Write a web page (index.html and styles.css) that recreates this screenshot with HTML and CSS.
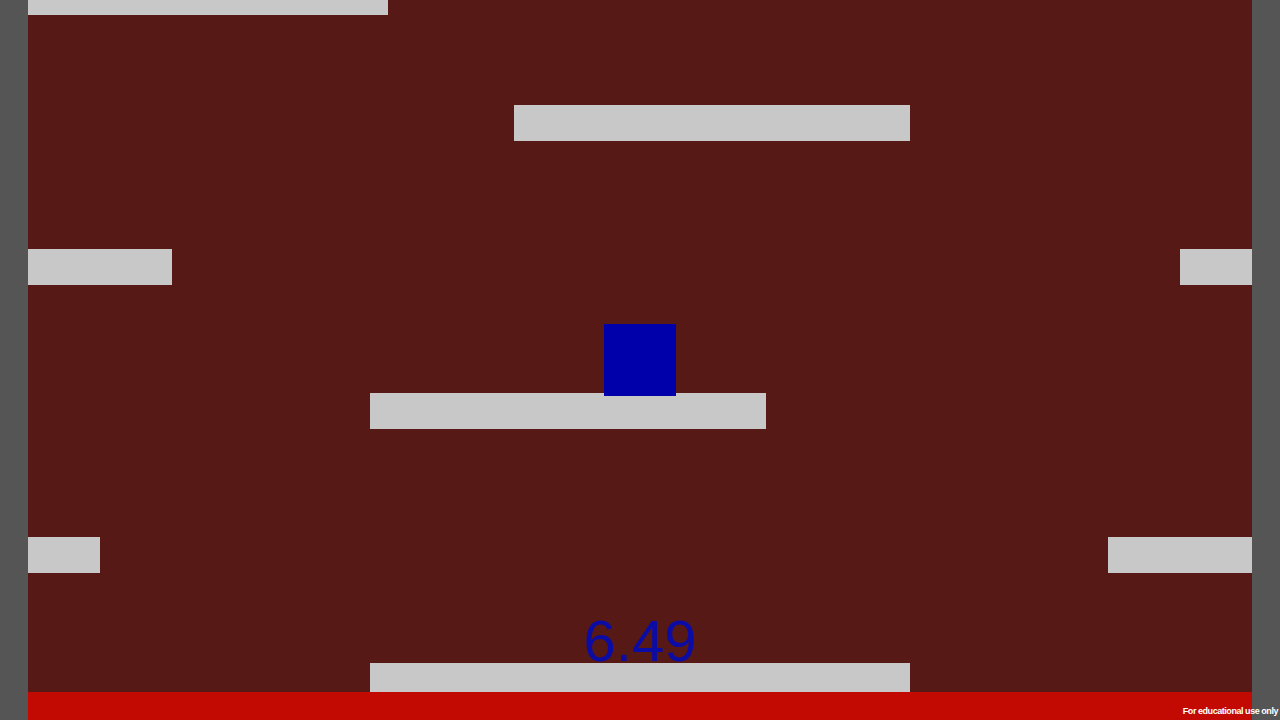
FILE: index.html
```html
<!DOCTYPE html>
<html>
<head>
<meta charset="utf-8">
<link rel="stylesheet" href="styles.css">
</head>
<body>
<div class="screen">
  <div class="gutter"></div>
  <div class="game">
    <div class="field">
      <div class="plat" style="left:0;top:0;width:360px;height:15px"></div>
      <div class="plat" style="left:486px;top:105px;width:396px"></div>
      <div class="plat" style="left:0;top:249px;width:144px"></div>
      <div class="plat" style="left:1152px;top:249px;width:72px"></div>
      <div class="plat" style="left:342px;top:393px;width:396px"></div>
      <div class="plat" style="left:0;top:537px;width:72px"></div>
      <div class="plat" style="left:1080px;top:537px;width:144px"></div>
      <div class="plat" style="left:342px;top:663px;width:540px;height:29px"></div>
      <div class="player" style="left:576px;top:324px"></div>
      <div class="score">6.49</div>
    </div>
    <div class="lava"></div>
  </div>
  <div class="gutter"></div>
  <div class="note">For educational use only</div>
</div>
</body>
</html>
```
FILE: styles.css
```css
html, body {
  margin: 0;
  padding: 0;
  width: 1280px;
  height: 720px;
  overflow: hidden;
  background: #555555;
}
.screen {
  position: relative;
  display: flex;
  width: 1280px;
  height: 720px;
}
.gutter {
  width: 28px;
  flex: none;
  background: #555555;
}
.game {
  width: 1224px;
  flex: none;
  display: flex;
  flex-direction: column;
}
.field {
  position: relative;
  height: 692px;
  background: #561915;
  overflow: hidden;
}
.lava {
  height: 28px;
  background: #c30a02;
}
.plat {
  position: absolute;
  height: 36px;
  background: #c8c8c8;
}
.player {
  position: absolute;
  width: 72px;
  height: 72px;
  background: #0000aa;
}
.score {
  position: absolute;
  left: 0;
  right: 0;
  top: 608px;
  text-align: center;
  font-family: "Liberation Sans", Arial, sans-serif;
  font-size: 58px;
  line-height: 66px;
  color: #0b0ba6;
}
.note {
  position: absolute;
  right: 2px;
  bottom: 4px;
  font-family: "Liberation Sans", Arial, sans-serif;
  font-size: 9px;
  line-height: 10px;
  letter-spacing: -0.45px;
  font-weight: bold;
  color: #ffffff;
  white-space: nowrap;
}
```
